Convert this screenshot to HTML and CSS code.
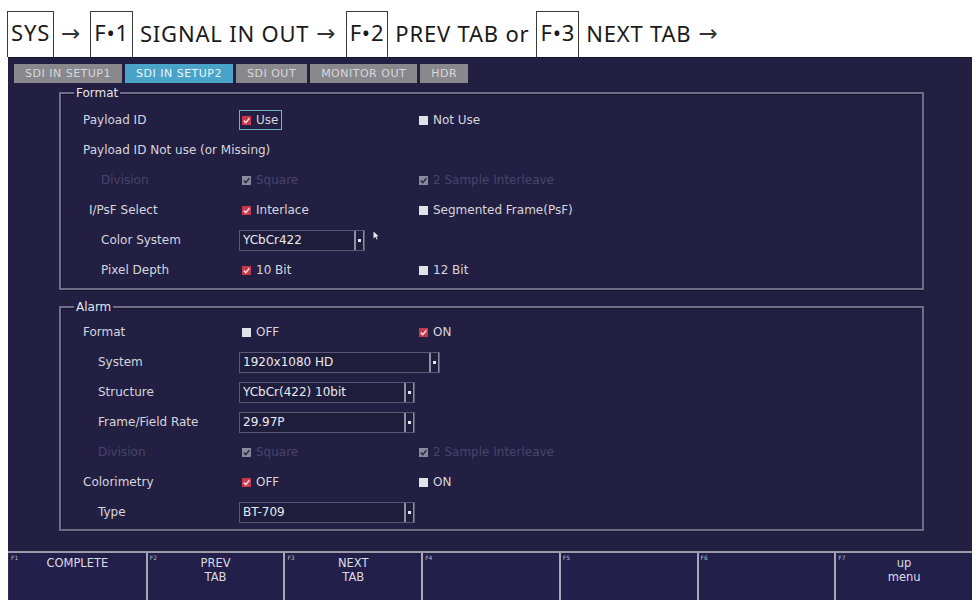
FILE: index.html
```html
<!DOCTYPE html>
<html>
<head>
<meta charset="utf-8">
<link rel="stylesheet" href="styles.css">
</head>
<body>
<div class="header">
  <span class="key">SYS</span><span class="arr">→</span>
  <span class="key">F•1</span><span class="txt">SIGNAL IN OUT</span><span class="arr">→</span>
  <span class="key">F•2</span><span class="txt">PREV TAB or</span>
  <span class="key">F•3</span><span class="txt">NEXT TAB</span><span class="arr">→</span>
</div>
<div class="screen">
  <div class="tabs">
    <span class="tab">SDI IN SETUP1</span>
    <span class="tab active">SDI IN SETUP2</span>
    <span class="tab">SDI OUT</span>
    <span class="tab">MONITOR OUT</span>
    <span class="tab">HDR</span>
  </div>
  <div class="panel">
    <fieldset class="group">
      <legend>Format</legend>
      <div class="row">
        <span class="l">Payload ID</span>
        <span class="cell"><span class="opt sel"><svg class="cb" viewBox="0 0 9 9"><rect width="9" height="9" fill="#c9374b"/><path d="M1.8 4.6 L3.8 6.6 L7.4 2.2" stroke="#f4dde0" stroke-width="1.5" fill="none"/></svg>Use</span></span>
        <span class="cell"><span class="opt"><span class="cb off"></span>Not Use</span></span>
      </div>
      <div class="row">
        <span class="l wide">Payload ID Not use (or Missing)</span>
      </div>
      <div class="row dis">
        <span class="l i1">Division</span>
        <span class="cell"><span class="opt"><svg class="cb" viewBox="0 0 9 9"><rect width="9" height="9" fill="#8a8a9c"/><path d="M1.8 4.6 L3.8 6.6 L7.4 2.2" stroke="#2a2848" stroke-width="1.5" fill="none"/></svg>Square</span></span>
        <span class="cell"><span class="opt"><svg class="cb" viewBox="0 0 9 9"><rect width="9" height="9" fill="#8a8a9c"/><path d="M1.8 4.6 L3.8 6.6 L7.4 2.2" stroke="#2a2848" stroke-width="1.5" fill="none"/></svg>2 Sample Interleave</span></span>
      </div>
      <div class="row">
        <span class="l i2">I/PsF Select</span>
        <span class="cell"><span class="opt"><svg class="cb" viewBox="0 0 9 9"><rect width="9" height="9" fill="#c9374b"/><path d="M1.8 4.6 L3.8 6.6 L7.4 2.2" stroke="#f4dde0" stroke-width="1.5" fill="none"/></svg>Interlace</span></span>
        <span class="cell"><span class="opt"><span class="cb off"></span>Segmented Frame(PsF)</span></span>
      </div>
      <div class="row">
        <span class="l i1">Color System</span>
        <span class="cell span2">
          <span class="dd w126"><span class="ddv">YCbCr422</span><span class="dda"></span></span>
          <svg class="cursor" viewBox="0 0 6 9" width="6" height="9"><path d="M0.5 0.5 L0.5 7.5 L2.3 5.8 L3.6 8.5 L4.6 8 L3.4 5.4 L5.6 5.3 Z" fill="#e8e8f0"/></svg>
        </span>
      </div>
      <div class="row">
        <span class="l i1">Pixel Depth</span>
        <span class="cell"><span class="opt"><svg class="cb" viewBox="0 0 9 9"><rect width="9" height="9" fill="#c9374b"/><path d="M1.8 4.6 L3.8 6.6 L7.4 2.2" stroke="#f4dde0" stroke-width="1.5" fill="none"/></svg>10 Bit</span></span>
        <span class="cell"><span class="opt"><span class="cb off"></span>12 Bit</span></span>
      </div>
    </fieldset>

    <fieldset class="group alarm">
      <legend>Alarm</legend>
      <div class="row">
        <span class="l">Format</span>
        <span class="cell"><span class="opt"><span class="cb off"></span>OFF</span></span>
        <span class="cell"><span class="opt"><svg class="cb" viewBox="0 0 9 9"><rect width="9" height="9" fill="#c9374b"/><path d="M1.8 4.6 L3.8 6.6 L7.4 2.2" stroke="#f4dde0" stroke-width="1.5" fill="none"/></svg>ON</span></span>
      </div>
      <div class="row">
        <span class="l i3">System</span>
        <span class="cell span2"><span class="dd w201"><span class="ddv">1920x1080 HD</span><span class="dda"></span></span></span>
      </div>
      <div class="row">
        <span class="l i3">Structure</span>
        <span class="cell span2"><span class="dd w176"><span class="ddv">YCbCr(422) 10bit</span><span class="dda"></span></span></span>
      </div>
      <div class="row">
        <span class="l i3">Frame/Field Rate</span>
        <span class="cell span2"><span class="dd w176"><span class="ddv">29.97P</span><span class="dda"></span></span></span>
      </div>
      <div class="row dis">
        <span class="l i3">Division</span>
        <span class="cell"><span class="opt"><svg class="cb" viewBox="0 0 9 9"><rect width="9" height="9" fill="#8a8a9c"/><path d="M1.8 4.6 L3.8 6.6 L7.4 2.2" stroke="#2a2848" stroke-width="1.5" fill="none"/></svg>Square</span></span>
        <span class="cell"><span class="opt"><svg class="cb" viewBox="0 0 9 9"><rect width="9" height="9" fill="#8a8a9c"/><path d="M1.8 4.6 L3.8 6.6 L7.4 2.2" stroke="#2a2848" stroke-width="1.5" fill="none"/></svg>2 Sample Interleave</span></span>
      </div>
      <div class="row">
        <span class="l">Colorimetry</span>
        <span class="cell"><span class="opt"><svg class="cb" viewBox="0 0 9 9"><rect width="9" height="9" fill="#c9374b"/><path d="M1.8 4.6 L3.8 6.6 L7.4 2.2" stroke="#f4dde0" stroke-width="1.5" fill="none"/></svg>OFF</span></span>
        <span class="cell"><span class="opt"><span class="cb off"></span>ON</span></span>
      </div>
      <div class="row">
        <span class="l i3">Type</span>
        <span class="cell span2"><span class="dd w176"><span class="ddv">BT-709</span><span class="dda"></span></span></span>
      </div>
    </fieldset>
  </div>
  <div class="fkeys">
    <div class="fk"><span class="fn">F1</span><span class="fl">COMPLETE</span></div>
    <div class="fk"><span class="fn">F2</span><span class="fl">PREV<br>TAB</span></div>
    <div class="fk"><span class="fn">F3</span><span class="fl">NEXT<br>TAB</span></div>
    <div class="fk"><span class="fn">F4</span><span class="fl"></span></div>
    <div class="fk"><span class="fn">F5</span><span class="fl"></span></div>
    <div class="fk"><span class="fn">F6</span><span class="fl"></span></div>
    <div class="fk"><span class="fn">F7</span><span class="fl">up<br>menu</span></div>
  </div>
</div>
</body>
</html>
```

FILE: styles.css
```css
* { box-sizing: border-box; }
html, body { margin: 0; padding: 0; background: #ffffff; }
body { width: 976px; height: 601px; overflow: hidden; }

.header {
  height: 57px;
  padding-left: 7px;
  display: flex;
  align-items: flex-end;
  gap: 7px;
  font-family: "Noto Sans", "DejaVu Sans", sans-serif;
  font-size: 22px;
  letter-spacing: 0.8px;
  color: #1a1a1a;
}
.header .key {
  height: 46px;
  border: 1px solid #3a3a3a;
  border-bottom: none;
  padding: 0 3px 4px 3px;
  line-height: 40px;
}
.header .txt, .header .arr {
  line-height: 40px;
  padding-bottom: 4px;
}
.header .arr {
  font-family: "DejaVu Sans", sans-serif;
  font-size: 23px;
  letter-spacing: 0;
  margin-right: 3px;
  color: #333;
}

.screen {
  margin-left: 8px;
  width: 964px;
  height: 543px;
  background: #221f42;
  border-top: 1px solid #16152b;
  display: flex;
  flex-direction: column;
  font-family: "DejaVu Sans", sans-serif;
  font-size: 12px;
  color: #d6d6de;
}

.tabs {
  display: flex;
  gap: 3px;
  padding: 6px 0 0 6px;
}
.tab {
  height: 19px;
  line-height: 19px;
  padding: 0 11px;
  background: #88888d;
  color: #d9d9de;
  font-size: 11px;
  letter-spacing: 0.5px;
}
.tab.active { background: #4aa3c9; color: #eaf6fc; }

.panel {
  flex: 1;
  padding: 3px 48px 0 51px;
}

.group {
  margin: 0;
  border: 2px solid #6f6e88;
  box-shadow: inset 1px 1px 0 #161530, 0 1px 0 #161530;
  padding: 5px 10px 3px 22px;
}
.group.alarm { margin-top: 10px; padding-top: 3px; padding-bottom: 2px; }
.group legend {
  padding: 0 2px;
  margin-left: -9px;
  line-height: 14px;
  color: #e4e4ec;
  font-size: 12px;
}

.row {
  display: grid;
  grid-template-columns: 156px 177px 1fr;
  height: 30px;
  align-items: center;
}
.l { white-space: nowrap; }
.l.wide { grid-column: span 3; }
.i1 { padding-left: 18px; }
.i2 { padding-left: 6px; }
.i3 { padding-left: 15px; }
.row.dis { color: #46446a; }

.cell { display: flex; align-items: center; }
.cell.span2 { grid-column: span 2; }

.opt {
  display: inline-flex;
  align-items: center;
  gap: 5px;
  padding: 2px 5px 2px 2px;
  border: 1px solid transparent;
  white-space: nowrap;
}
.opt.sel {
  border-color: #6db2c6;
  height: 20px;
  padding-right: 3px;
}
.cb { width: 9px; height: 9px; display: inline-block; flex: none; }
.cb.off { background: #e2e2ea; }

.dd {
  display: flex;
  height: 21px;
  border: 1px solid #5a5874;
  background: #1f1d3c;
  color: #eaeaf0;
}
.w126 { width: 126px; }
.w176 { width: 176px; }
.w201 { width: 201px; }
.ddv { flex: 1; padding-left: 3px; line-height: 19px; }
.dda {
  width: 10px;
  border-left: 2px solid #8f8ea4;
  border-right: 1px solid #8f8ea4;
  display: flex;
  align-items: center;
  justify-content: center;
}
.dda::after {
  content: "";
  width: 3px;
  height: 3px;
  background: #e6e6ee;
}
.cursor { margin-left: 8px; align-self: flex-start; margin-top: 1px; }

.fkeys {
  height: 49px;
  display: grid;
  grid-template-columns: repeat(7, 1fr);
  border-top: 2px solid #9c9cab;
  background: #221f4a;
}
.fk {
  position: relative;
  border-left: 2px solid #a7a7b4;
  display: flex;
  justify-content: center;
  padding-top: 3px;
}
.fk:first-child { border-left: 1px solid #2e2c50; }
.fn {
  position: absolute;
  left: 2px;
  top: 1px;
  font-size: 6px;
  color: #b8b8c4;
}
.fl {
  text-align: center;
  font-size: 11.5px;
  line-height: 14px;
  color: #dcdce4;
}
```
